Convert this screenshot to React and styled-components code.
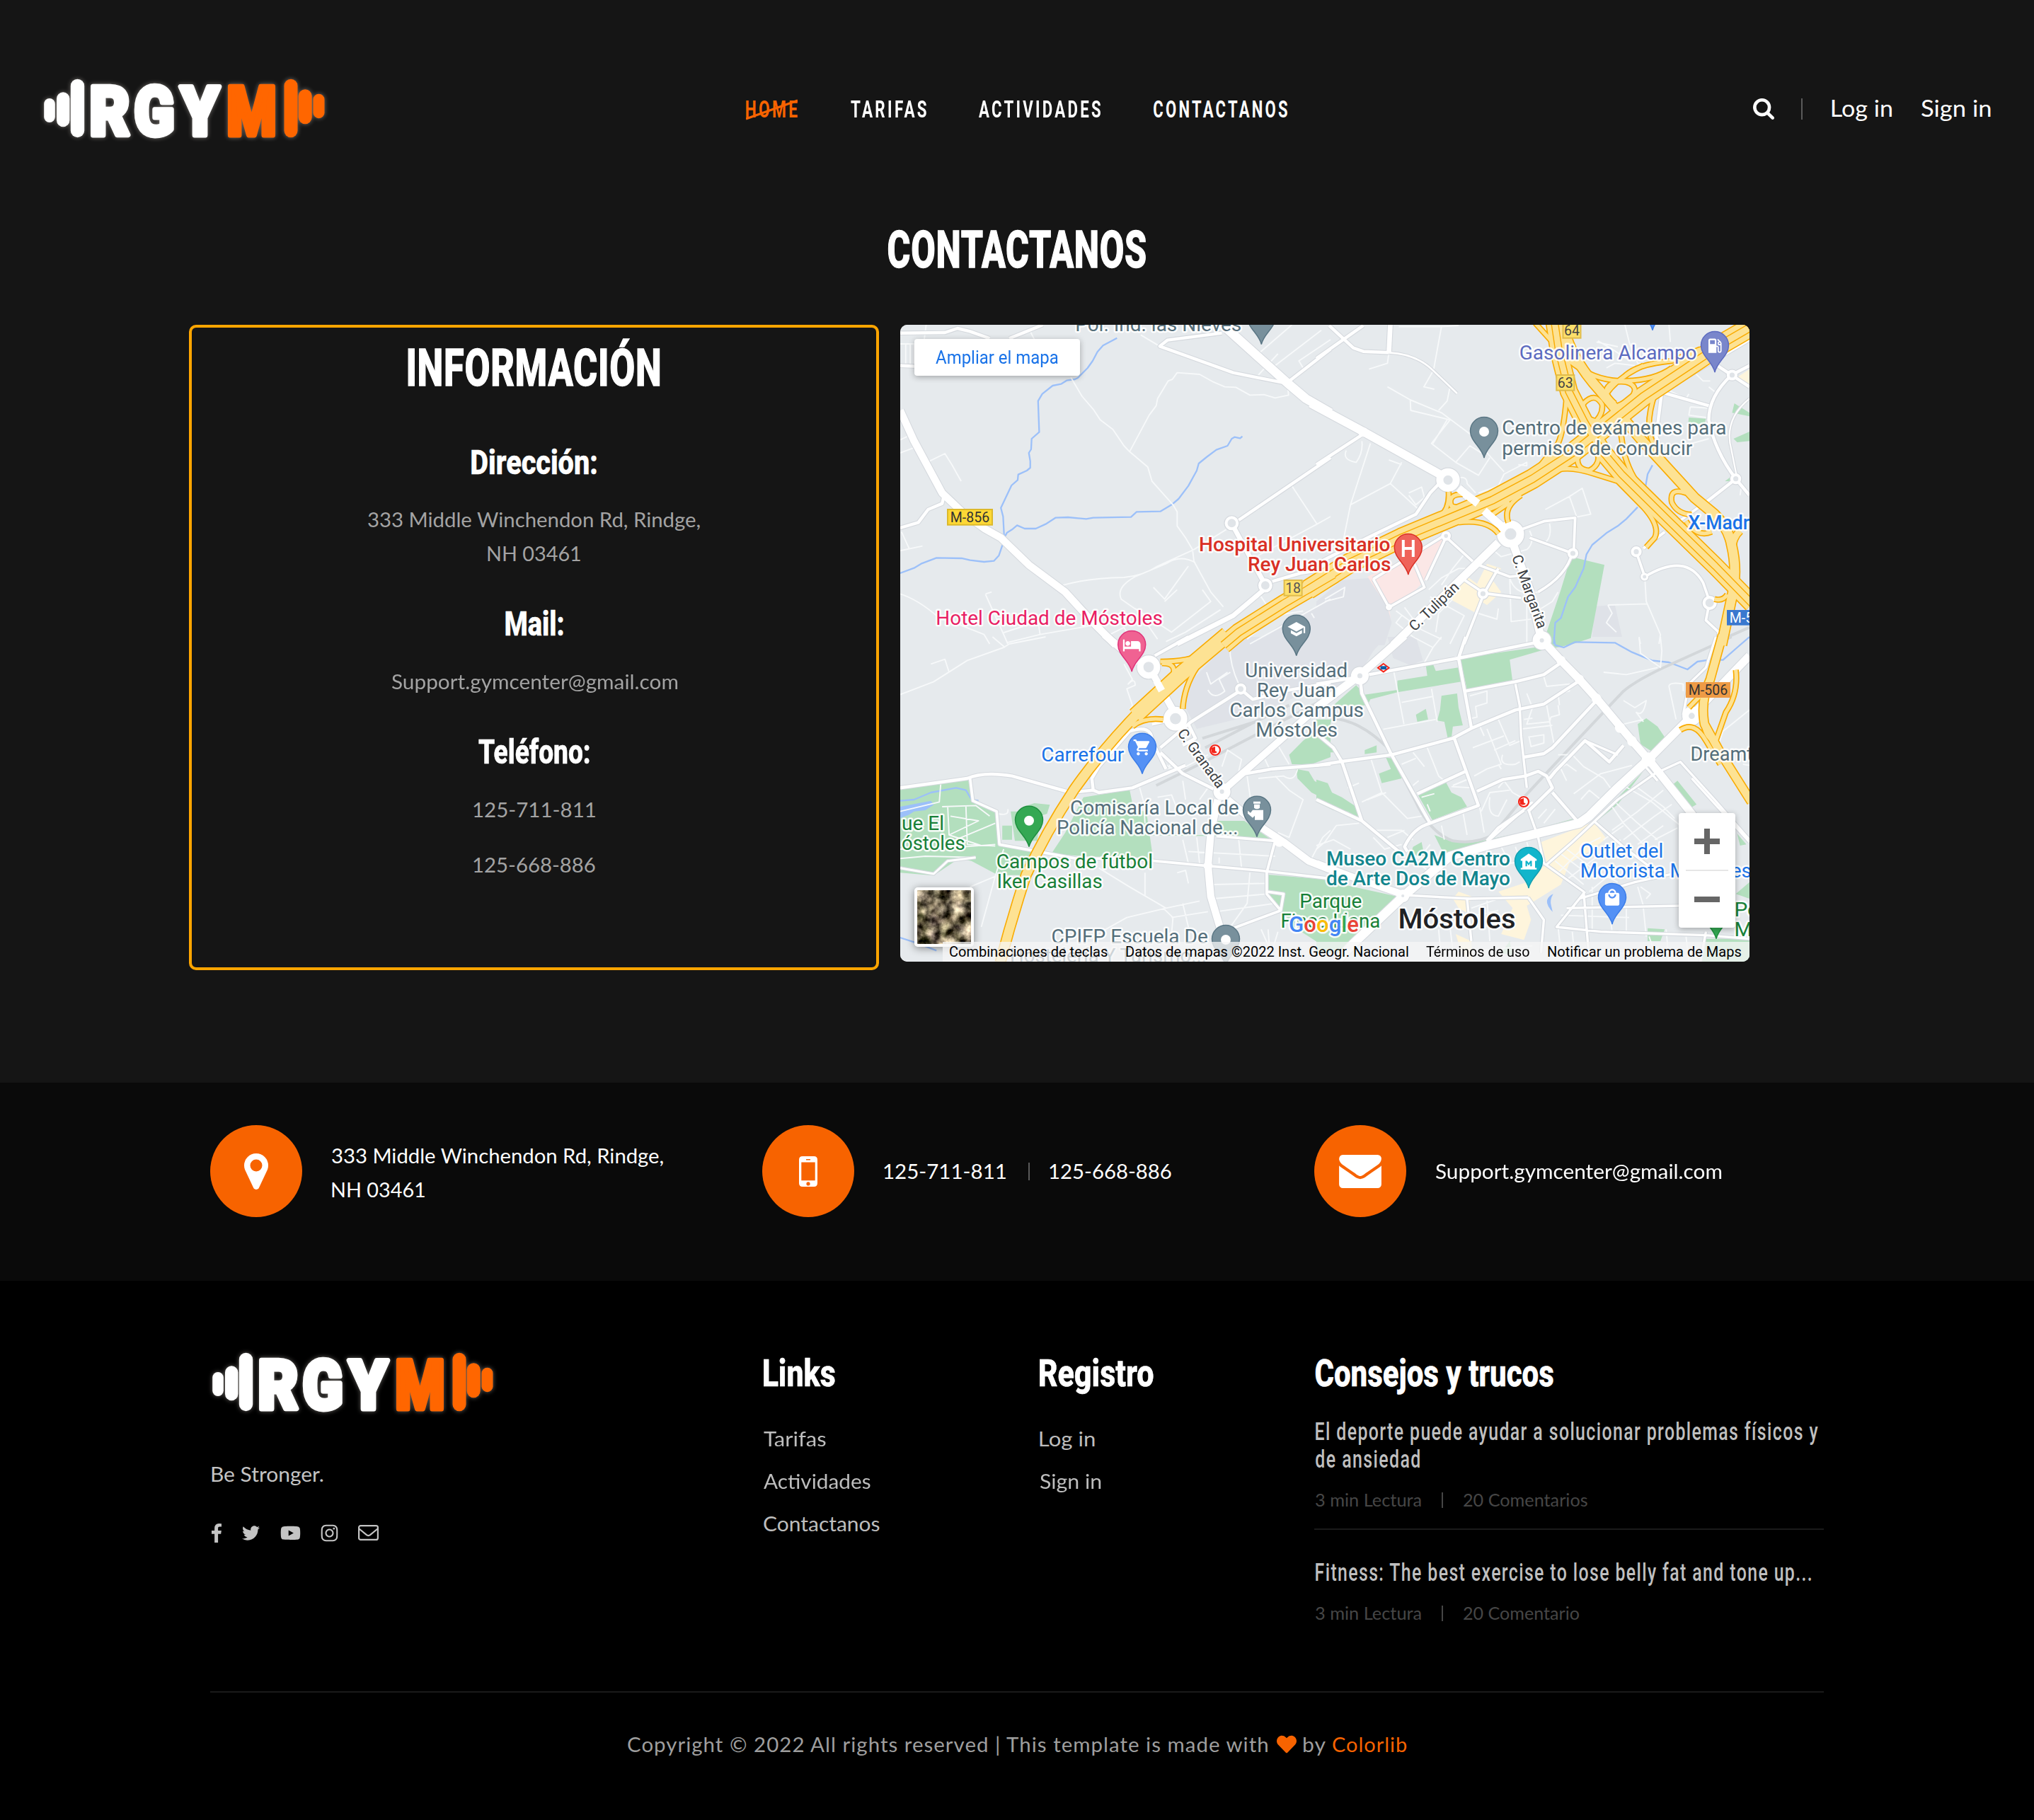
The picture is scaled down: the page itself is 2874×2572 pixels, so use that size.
import React, { useLayoutEffect, useRef, useState } from "react";
import styled, { createGlobalStyle } from "styled-components";
import { FaTwitter, FaYoutube, FaInstagram, FaHeart } from "react-icons/fa";
import { MdHotel, MdShoppingCart, MdSchool, MdLocalGasStation, MdLocalMall, MdMuseum } from "react-icons/md";

const ORANGE = "#f76300";

const GlobalStyle = createGlobalStyle`
  * { box-sizing: border-box; }
  body { margin: 0; background: #000; }
`;

/* ---------- text set to a measured width ---------- */
const FitBox = styled.span`
  display: block;
  flex: none;
  width: ${(p) => p.$w}px;
  white-space: nowrap;
  font-family: ${(p) => (p.$head ? '"Roboto", sans-serif' : '"Lato", sans-serif')};
  font-size: ${(p) => p.$size}px;
  font-weight: ${(p) => p.$weight || 400};
  line-height: ${(p) => p.$line}px;
  letter-spacing: ${(p) => p.$track || 0}px;
  color: ${(p) => p.$color || "#fff"};
  -webkit-text-stroke: ${(p) => p.$bold || 0}px currentColor;
`;
const FitInner = styled.span`
  display: inline-block;
  vertical-align: top;
  transform-origin: 0 50%;
`;

function Fit({ w, size, line, weight, track, color, head, bold, children }) {
  const ref = useRef(null);
  const [transform, setTransform] = useState("none");
  useLayoutEffect(() => {
    const cs = getComputedStyle(ref.current);
    const ctx = document.createElement("canvas").getContext("2d");
    ctx.font = `${cs.fontWeight} ${cs.fontSize} ${cs.fontFamily}`;
    ctx.letterSpacing = `${track || 0}px`;
    const m = ctx.measureText(children);
    const s = w / (m.actualBoundingBoxLeft + m.actualBoundingBoxRight);
    setTransform(`translateX(${m.actualBoundingBoxLeft * s}px) scaleX(${s})`);
  }, [w, track, children]);
  return (
    <FitBox $w={w} $size={size} $line={line} $weight={weight} $track={track} $color={color} $head={head} $bold={bold}>
      <FitInner ref={ref} style={{ transform }}>{children}</FitInner>
    </FitBox>
  );
}

const Display = (p) => <Fit head size={72} line={86} weight={800} bold={1.4} track={1} {...p} />;
const Subhead = (p) => <Fit head size={48.5} line={58} weight={800} bold={0.6} {...p} />;
const Body = (p) => <Fit size={29} line={48} {...p} />;

/* ---------- logo ---------- */
const LogoSvg = styled.svg`
  display: block;
  width: 398px;
  height: 88px;
  flex: none;
  overflow: visible;
  filter: drop-shadow(0 0 3px rgba(255, 245, 235, 0.4));
  text {
    font-family: "Roboto", sans-serif;
    font-weight: 900;
    font-size: 96px;
    stroke-width: 7px;
    stroke-linejoin: round;
  }
`;
const LOGO_BARS = [
  [1.2, 29, 15.6, 34, "#fff"], [19, 20.3, 18.4, 49, "#fff"], [38.8, 1.7, 19.4, 82.5, "#fff"],
  [340.5, 1.7, 19, 82.5, "#ff6600"], [360.7, 16.3, 19, 49, "#ff6600"], [381.5, 22.7, 16, 34.5, "#ff6600"],
];
const LOGO_LETTERS = [
  ["R", 65.5, 57, "#fff"], ["G", 128.5, 57, "#fff"], ["Y", 194, 55, "#fff"], ["M", 259.5, 70, "#ff6600"],
];
const Logo = () => (
  <LogoSvg viewBox="0 0 398 88">
    {LOGO_BARS.map(([x, y, w, h, c]) => <rect key={x} x={x} y={y} width={w} height={h} rx={w / 2} fill={c} />)}
    {LOGO_LETTERS.map(([t, x, w, c]) => (
      <text key={t} x={x} y="80.5" textLength={w} lengthAdjust="spacingAndGlyphs" fill={c} stroke={c}>{t}</text>
    ))}
  </LogoSvg>
);

/* ---------- header ---------- */
const Top = styled.section`
  height: 1530px;
  background: #151515;
`;
const Header = styled.header`
  display: grid;
  grid-template-columns: 1fr auto 1fr;
  align-items: center;
  padding: 110px 62px 0 61px;
`;
const Nav = styled.nav`
  display: flex;
  gap: 74.5px;
`;
const NavItem = styled.a`
  position: relative;
`;
const Strike = styled.svg`
  position: absolute;
  left: 0;
  top: 6px;
  width: 73px;
  height: 30px;
`;
const Account = styled.div`
  display: flex;
  align-items: center;
  justify-self: end;
`;
const Separator = styled.i`
  width: 2px;
  height: ${(p) => p.$h}px;
  margin: 0 ${(p) => p.$right}px 0 ${(p) => p.$left}px;
  background: ${(p) => p.$color || "#5a5a5a"};
`;
const LoginWrap = styled.div`
  display: flex;
  gap: 42px;
  padding-bottom: 2px;
`;
const TitleRow = styled.h1`
  margin: 113px 0 62px;
  display: flex;
  justify-content: center;
`;

/* ---------- panels ---------- */
const Panels = styled.div`
  display: flex;
  align-items: flex-start;
  gap: 30px;
  padding-left: 267px;
`;
const Info = styled.div`
  width: 975px;
  height: 912px;
  padding-top: 15px;
  border: 4px solid #ffa500;
  border-radius: 10px;
  display: flex;
  flex-direction: column;
  align-items: center;
`;
const InfoBlock = styled.div`
  margin-top: ${(p) => p.$mt}px;
  display: flex;
  flex-direction: column;
  align-items: center;
  gap: ${(p) => p.$gap || 0}px;
`;
const InfoTitle = styled.div`
  margin-bottom: 27.5px;
`;

/* ---------- map ---------- */
const MapCard = styled.div`
  position: relative;
  width: 1200px;
  height: 900px;
  border-radius: 10px;
  overflow: hidden;
  background: #e7eaed;
`;
const MapSvg = styled.svg`
  display: block;
  width: 1200px;
  height: 900px;
  font-family: "Roboto", sans-serif;
`;
const Enlarge = styled.button`
  position: absolute;
  left: 20px;
  top: 20px;
  width: 234px;
  height: 52px;
  padding: 0 0 0 30px;
  border: 0;
  border-radius: 4px;
  background: #fff;
  text-align: left;
  box-shadow: 0 2px 8px rgba(0, 0, 0, 0.3);
`;
const ZoomBox = styled.div`
  position: absolute;
  right: 20px;
  top: 690px;
  width: 80px;
  height: 162px;
  border-radius: 4px;
  background: #fff;
  box-shadow: 0 2px 8px rgba(0, 0, 0, 0.3);
  display: flex;
  flex-direction: column;
  align-items: center;
  svg { display: block; }
`;
const ZoomLine = styled.i`
  width: 60px;
  height: 2px;
  background: #e6e6e6;
`;
const Thumb = styled.div`
  position: absolute;
  left: 20px;
  top: 795px;
  width: 84px;
  height: 84px;
  border: 4px solid #fff;
  border-radius: 5px;
  overflow: hidden;
  box-shadow: 0 2px 12px rgba(0, 0, 0, 0.45);
  svg { display: block; }
`;
const Legal = styled.div`
  position: absolute;
  right: 0;
  bottom: 0;
  width: 1140px;
  height: 28px;
  padding-left: 10px;
  display: flex;
  align-items: center;
  gap: 25.5px;
  background: rgba(245, 245, 245, 0.75);
`;

const QUADS = {
  A: "translate(-12,-9) scale(0.39541,0.33333)",
  B: "translate(588,-9) scale(0.40179,0.33333)",
  C: "translate(-12,441) scale(0.39541,0.33333)",
  D: "translate(588,441) scale(0.40179,0.33333)",
};

const CAMPUS = {
  A: "M1568 1200L1500 1230L1400 1290L1290 1380L1568 1380Z",
  B: "M0 1200L90 1110L190 1100L250 1220L265 1290L240 1385L0 1385ZM980 1220L1050 1215L1075 1350L970 1350Z",
  C: "M1220 0L1568 0L1568 190L1300 330L1090 390L1050 300L1060 200Z",
  D: "M0 0L245 0L200 60L170 120L100 200L0 290ZM250 0L350 0L375 100L330 120L270 90Z",
};
const PINK = { B: "M180 1095L290 1030L465 905L385 1105L350 1150L255 1225L262 1275L250 1225Z" };
const CREAM = {
  B: "M520 1085L565 1125L600 1040L650 1060L620 1110L650 1160L600 1215L580 1200L555 1245L470 1190ZM1480 250L1523 215L1523 280Z",
  D: "M790 870L975 785L1020 855L960 910L890 960L860 1050L740 1140L755 1200L730 1285L650 1260L690 1150L640 1080L740 1040L810 960ZM480 1110L500 1080L545 1100L530 1170L500 1150ZM490 1260L545 1290L550 1377L510 1340Z",
};
const GREEN = {
  B: "M895 1010L1013 1045L965 1355L890 1385L810 1385L810 1330L860 1150ZM1310 420L1370 425L1365 450L1308 440ZM1470 360L1523 400L1523 415L1462 400ZM1467 510L1523 480L1523 520L1480 525ZM1437 690L1470 660L1470 690Z",
  C: "M30 645L275 600L290 700L380 745L385 880L470 900L515 920L505 1010L380 1010L285 950L240 940L150 1012L30 1000ZM395 800L430 800L430 860L395 860ZM425 740L455 740L470 720L510 705L565 712L555 750L530 760L520 865L440 865ZM685 680L850 648L865 735L910 740L935 950L570 920L620 830ZM860 840L1140 840L1160 780L1260 780L1350 855L1180 845ZM1342 1008L1568 1030L1568 1330L1450 1240L1390 1160L1340 1090ZM1420 500L1470 440L1568 350L1568 510L1500 540L1430 540ZM1445 560L1490 570L1510 610L1545 640L1568 700L1500 660L1450 600Z",
  D: "M505 90L800 40L830 0L960 0L870 40L800 55L680 97L690 190L530 225ZM285 185L390 165L385 120L410 115L420 145L500 130L510 190L285 235L190 265L180 290L60 290L140 205L170 245L285 225ZM440 250L495 240L500 300L515 375L480 380L475 430L462 430L450 360L425 355L435 310ZM350 330L385 305L393 350L355 360ZM170 480L212 460L212 490L170 497ZM245 512L268 515L300 600L230 620L220 580L262 560ZM355 665L455 615L475 660L510 680L530 720L408 777ZM415 840L480 870L560 870L600 860L760 820L905 770L900 785L600 885L450 915L440 900ZM0 605L40 620L55 660L90 680L140 720L155 770L110 740L60 735L0 700ZM0 350L55 350L30 420L70 490L0 490ZM0 1025L300 1105L130 1300L90 1340L0 1340ZM1130 370L1160 345L1200 380L1225 425L1185 490L1140 455ZM1250 630L1270 610L1337 710L1310 730ZM1150 570L1045 700L975 780L990 778L1060 710ZM340 890L370 870L380 930L330 930ZM1480 835L1512 880L1490 885ZM1165 1235L1225 1240L1210 1290L1165 1290ZM1370 1280L1523 1280L1523 1377L1355 1377ZM1523 1040L1475 1090L1523 1110ZM650 1340L680 1290L690 1350Z",
};
const WATER_FILL = {
  C: "M30 720L140 695L150 712L120 735L80 740L60 755L30 768Z",
  D: "M833 1090Q790 1115 831 1166L826 1140Q820 1115 833 1090Z",
};
const WATER = {
  A: "M805 83L755 115L735 142L718 180L700 210L665 252L655 258L625 263L605 278L575 285L538 320L523 350L527 482L500 510L498 555L490 570L495 605L495 633L483 645L452 662L450 685L428 708L390 803L398 840L402 930L412 908L430 895L448 877L475 891L515 891L550 872L585 845L630 843L695 850L720 845L855 842L875 820L960 818L1000 790L1025 765L1060 710L1090 645L1097 615L1125 588L1160 557L1200 540L1215 510L1225 503L1245 508L1253 500M396 960L383 1005L365 1028L330 1032L280 1025L250 1017L160 1015L105 1040L80 1058L30 1080",
  B: "M1182 622L1165 660L1155 730M1130 800L1090 850L1060 880L1020 910L970 960L950 1000L940 1060L910 1140L885 1180L860 1270L840 1290L835 1380",
  C: "M30 695L80 690L140 660L230 640L265 650L285 690L310 695M30 1275L95 1300L160 1330",
  D: "M835 0L840 35L870 45L910 22L1050 25L1110 65L1180 100L1240 108L1305 138L1340 105L1380 98L1430 98L1480 45L1523 0",
};
const RAIL = {
  B: "M1400 1375L1523 1310",
  C: "M945 630L1100 540L1568 250M1110 430L1300 360L1420 290M1120 470L1330 340",
  D: "M50 345Q150 350 250 470L350 700Q400 830 480 865Q560 880 620 840L730 680L900 460L1080 230Q1130 180 1240 120L1460 0",
};
const MINOR = {
  A: "M640 250L680 330L720 385L745 430L790 470L830 540L850 565L915 630L930 690L960 730L1005 790L1020 820L1020 880L1050 930L1075 980L1080 1030L1110 1095L1140 1160L1185 1223M850 565L920 410L945 370L950 340L988 265L1003 258L1020 230L1100 237L1150 270L1190 290L1230 292L1280 325L1330 323L1370 337L1418 325L1415 285M605 1133Q700 1100 830 1098Q900 1090 950 1050L1080 980L1195 895M1085 1035Q1030 1000 980 1040L870 1095Q800 1140 820 1190L880 1240L950 1360M1430 710L1520 872L1568 840M1520 872L1310 1005M135 605L190 573L215 620L248 690M30 515L60 498M30 570L80 548M30 985L110 965M35 905L62 975M30 1168Q90 1190 160 1260L330 1340L350 1380M335 1168L357 1160M335 1170L400 1340L415 1380M400 1332L470 1305M410 1375L530 1340L700 1305M530 1340L525 1300M935 1140L975 1190L1060 1050M975 1200L1020 1150M1110 1150L1140 1200L1000 1330L870 1230M780 1340L830 1310L850 1350M1175 1235L1050 1330L980 1370M30 108L80 108L80 200M50 108L50 195M66 108L66 195M123 27L115 100M30 70L115 66M495 55L510 90M890 70L958 118M1310 150L1430 27M1370 200L1535 50M1455 180L1470 210L1455 180L1568 90M1310 240L1380 150M1290 1180L1320 1180L1345 1225M1270 1360L1370 1260L1470 1240M1280 1380L1568 1190M1500 1250L1510 1270",
  B: "M185 215L250 190L255 145M290 35L440 35L430 100L412 220L378 290L415 300M440 35L500 30M470 290L460 350L430 390M250 290L330 345L440 400L540 490L660 650M330 345L332 390L470 430L405 530L490 610L570 665L610 590M460 430L410 530M490 610L540 540L580 570M190 530L120 790L95 940M120 790L260 700L360 810M260 700L300 610M105 560Q90 600 140 610Q165 570 160 520M255 600L300 620M325 740L370 715L380 760L350 790L325 750M570 740L640 710L660 660L740 610L740 625L710 620M505 675Q530 670 530 700L560 740M805 810L890 755L935 720L965 830L820 865M890 755L915 840M750 900Q770 950 740 980L650 1010L620 980M820 870Q830 930 800 955M780 1160Q700 1180 680 1100M680 1100L685 1285L790 1270M740 1185L740 1380M440 1130L480 1060L520 1000M395 1150L440 1100L500 1060L560 1060M400 1180L520 1260L470 1380M280 1240L370 1320L440 1360M310 1225L350 1290M480 1190L430 1250L420 1330M555 1245L635 1275L640 1230M850 1160L830 1200L790 1230M300 1260L280 1290L340 1350M985 100L1060 120M990 95L1040 130L1090 170L1150 180M1020 210L1050 190L1120 200M1240 27L1245 100M1085 27L1100 100L1130 190L1200 200M1230 300L1300 340L1310 320M1315 375L1375 380M1315 375L1310 410L1370 420M1380 290L1400 310M1330 230L1360 265L1385 265M1290 540L1380 510M1155 1095L1160 1200L1210 1340L1205 1380M1025 1215L1165 1210M1025 1215L1040 1250L1020 1290L1055 1330M1135 1355L1140 1380M1490 750L1495 710M30 1190L100 1140L95 1180L30 1200",
  C: "M30 245L150 190L270 100L400 45L420 30L550 0M360 0L405 45M140 115L190 95L205 150M830 115L860 180L845 200Q870 170 870 205L840 220L860 290L850 310M1210 0Q1200 100 1240 200M1125 150L1140 200L1200 150M1130 225Q1150 270 1190 230L1170 180L1210 150M885 635L900 700L905 790M950 680L1000 670L1020 730M1040 610L1050 690M1100 690L1130 640M1180 550L1200 480L1250 520L1240 570M1270 590L1290 750M1330 510L1350 560M1370 590L1420 650L1470 690L1420 850L1380 830M1310 600L1400 590Q1440 620 1450 560M1380 460L1420 540M740 980L850 1060L980 1150L1100 1120M905 1000L905 1100M1000 1190L1130 1165M970 1150L1005 1190L1000 1260L1020 1300M980 1150L840 1190L750 1250M280 1060L370 1015M400 900L370 1015L320 1230M1040 860L1060 960M1090 850L1100 960M1240 860L1250 980M1060 910L1370 930M1150 1050L1340 1045M1150 1110L1340 1090M1160 1165L1370 1130M1280 1000L1270 1130L1210 1230M1020 1000L1050 990L1060 1045M1170 960L1170 935M1040 1130L1060 1230M1320 1240L1350 1320L1345 1240M1380 1250L1360 1330M200 720L205 840L320 885M175 625L170 700L30 740M180 720L300 715L350 760M265 715L270 880L370 887M210 870L370 790M205 840L310 780L210 760M30 900L200 895L370 880M30 940L120 930L300 935M380 750Q420 760 415 730M960 530L1020 570L1130 500M980 460L1010 420L1050 410M1000 520L990 560M1500 940L1540 850L1568 820M1568 530L1480 550",
  D: "M340 0L410 45L440 0M410 45L370 130M272 145L308 370M300 278L412 252M235 392L420 350M405 220L425 360M540 250L600 230L600 280L560 295L565 340L530 350M590 420L575 380M640 350L680 460L720 440M625 480L700 440M550 470L660 420M600 390L650 540L600 560L555 590M655 500Q640 550 700 540L715 530M800 170L810 210L890 200L890 230L850 240L855 290M740 240L760 300L740 370L820 360L825 340L855 330L850 290M810 290L835 450M725 390L830 375M745 425L800 415L800 450L755 465L748 425M730 350L760 345M850 560L880 540L915 570M880 610L860 560M900 500L940 550L1010 600L1040 650M945 440L1000 500M850 500L900 500M905 665L1000 580L1110 545M930 690L960 650L1000 690M1080 270L1120 300L1160 270Q1150 340 1125 320L1150 360M1135 0L1140 70L1210 130L1215 60L1210 0M1080 370L1150 350M1240 210Q1240 190 1290 200L1290 230M1240 210L1265 350M1010 150L1090 160L1200 130M1430 400L1523 310M1410 470L1430 400M1500 540L1523 545M1080 630L1180 700L1280 800M1050 700L1130 790L1200 860M1040 720L1080 790L1150 880M1130 640L1220 720L1260 770M1040 820L1130 740L1220 650M1080 860L1190 760L1250 710M1130 880L1220 800M1190 860L1270 810M1010 860L1080 800M880 900L980 990L1060 1040M860 920L960 1010M840 950L940 1050M850 1000L950 880L1000 850M880 1030L1000 920L1070 860M960 1080L1060 980M340 490L380 550M390 470L430 590L450 610M300 540L350 515M340 630L360 610M190 510L230 660L160 700M230 660L320 770L370 760M180 690L245 660M110 640L150 620M70 800L30 870L0 900M70 800L150 790M200 820L300 820L340 860M250 850L310 820M480 630L540 600L550 640L475 635M370 680L415 665M400 740L390 710M450 860L440 800M530 840L515 740M590 830L570 690M580 740L610 660L680 650M610 680Q600 760 640 760L670 690M640 640L660 610L690 660L720 680M640 540L650 560M780 770L810 730M800 790L840 730M640 880L750 850M650 890L680 960L750 950M700 890L720 960M740 870L760 950M310 890L360 940L400 880M360 960L440 930M340 940L400 1000M545 1150L640 1110M470 1230L480 1330L500 1377M430 1240L440 1377M560 1180L640 1160M560 1230L650 1220M600 1110L610 1290M850 1230L860 1340M900 1250L910 1377M970 1060L970 1250M1030 1150L1040 1250M1090 1140L1090 1260M1150 1150L1160 1270M1000 1100L1020 1060L1080 1080M1140 1060L1175 1090L1160 1110M1130 1060L1150 1140M860 1180L1100 1190M920 1330L1200 1350M1170 1270L1200 1377M560 1330L760 1310M1230 1240L1240 1377M1300 1270L1310 1377M200 850L240 900L300 880M0 885L60 860L120 900",
};
const MAJOR = [
  ["A", 6, "M30 62L190 60L235 42L280 55L350 85M420 85L540 27M1180 62L985 92L958 118L1220 230L1410 275L1568 130M1240 855L1568 590M1360 1115L1460 1080L1568 1060M30 200L90 203M185 760L180 785L130 810L95 865L30 888"],
  ["B", 6, "M0 620L165 490M0 1040L180 930L350 830L400 740L440 690M0 170L165 30M45 30L130 125L165 140L255 145"],
  ["B", 9, "M255 145L260 27"],
  ["B", 3.5, "M255 145Q350 150 410 220L495 318"],
  ["A", 9, "M1215 870L1335 1130M1340 1140L1220 1260L1020 1380"],
  ["B", 6, "M1460 240Q1380 330 1380 430Q1400 560 1475 680L1523 750M1475 680L1375 775M1205 310L1380 370M1460 240L1410 200M1460 240L1523 200M1460 240L1523 290M1523 90L1215 310L1195 500L1230 620L1360 780"],
  ["B", 5, "M1375 775L1270 865M1225 905L1150 975M1125 990L1155 1095Q1300 990 1360 1120L1383 1200L1370 1280L1415 1330L1410 1380"],
  ["B", 5, "M750 930L900 995Q880 1090 780 1160M720 895L800 860L910 845L905 990M520 1380L590 1165L640 1060M560 1040L680 1095L720 1090M510 1100L590 1165L720 1185M200 1105L450 920L550 1030M200 1105L255 1225L380 1140L345 1040M385 1110L455 930"],
  ["B", 3, "M1523 340Q1430 430 1460 560L1480 680"],
  ["C", 6, "M1060 0L940 80M720 650L740 660L860 640L960 590L1050 545M30 640L270 600Q330 570 430 590L640 660L720 650L715 600L740 550L850 400Q930 370 930 440L980 560M1240 585L1360 560L1568 540M1150 645L1040 580L960 490M960 470L1070 360L1250 225M1250 225L1290 265L1400 230L1568 195M930 370L1000 350M1060 370L1085 430L1040 460"],
  ["C", 5, "M280 600L290 695L375 740L385 880L500 905L660 940L850 940L1120 970L1310 990L1568 1025M1160 845L1370 865L1340 1000L1340 1090L1390 1160L1220 1235M1390 1160L1400 1090L1340 1080"],
  ["C", 4, "M30 980L150 1005L200 950L300 935"],
  ["D", 6, "M0 200L150 170M185 160L500 90L790 20M500 90L545 385M155 190L160 240L260 490L400 790M500 90L525 0M0 545L90 528L265 500L480 430L550 385L700 310L800 285L920 190M525 230L700 190L800 160L860 110M985 270L830 470L800 495L730 510M0 410L60 470L90 530L160 780L300 920M400 790L570 715L485 430M355 665L525 570M565 655L655 605L735 590L780 570L810 590L830 640L745 740M600 865L640 810L730 735M830 660L920 785M820 600L840 570L945 440L1030 530L1080 460M400 790Q340 810 310 890L320 910M0 690L160 780"],
  ["D", 4.5, "M700 200L715 290L720 420L740 640M745 730L780 850L800 960M600 870L760 700M310 1095L540 1110L745 1105M745 1105L800 1200L790 1340M530 1110L545 1290M800 960L940 1080L960 1377M810 965L900 870L1060 690L1190 580L1280 530L1400 690L1523 860M945 1080L845 1230L1000 1250L1370 1265L1523 1280M880 1150L1280 1140M925 1110L1120 1040L1270 1000M1320 600L1523 870M975 780L1080 890L1200 1000M1060 500L945 440M1000 270L1060 370M1150 540L1200 610M1370 1250L1350 1377M1405 0L1370 130L1310 200L1290 330"],
  ["A", 14, "M30 390L80 520L180 740L260 830L330 890L390 930L490 1045L620 1160L720 1290L800 1385"],
  ["C", 14, "M760 -10L880 110"],
  ["A", 17, "M1190 35L1415 275L1480 340L1568 400"],
  ["B", 16, "M-20 360L165 480L440 665"],
  ["B", 15, "M500 720L660 890M270 1385L640 950M690 950L750 1150L795 1380"],
  ["C", 13, "M935 160L1005 310M1568 250L1180 655"],
  ["C", 14, "M1200 690L1310 800L1400 870L1490 950L1575 990M1165 690L1140 830L1130 970L1140 1100L1175 1240"],
  ["D", 15, "M310 -5L150 165L0 300M795 15L860 100L925 180L985 260L1065 375L1110 440L1168 520L1320 750L1400 880M1168 520L1320 335L1523 80"],
  ["D", 17, "M1168 520L1060 640L960 760L925 790L600 885L470 930L310 1095L130 1300L70 1377"],
  ["D", 13, "M0 960L120 1015L300 1090"],
];
const ROUNDABOUTS = [
  ["B", 463, 685, 29, 10], ["B", 683, 914, 34, 11], ["C", 918, 128, 30, 9], ["C", 1014, 347, 31, 9],
  ["D", 153, 165, 20, 9], ["D", 793, 15, 20, 10], ["D", 1320, 335, 22, 9], ["C", 1180, 656, 19, 9],
  ["A", 1215, 868, 20, 4], ["A", 1335, 1132, 20, 4], ["B", 902, 996, 14, 4], ["B", 1125, 989, 14, 4],
  ["B", 1383, 1206, 20, 4], ["B", 1475, 680, 14, 4], ["B", 586, 1167, 14, 4], ["B", 456, 922, 12, 4],
  ["B", 1462, 240, 14, 4], ["B", 1154, 1095, 10, 3], ["C", 1247, 221, 15, 4], ["D", 304, 1098, 14, 7], ["B", 255, 1224, 6, 4],
];
const HUBS = [["D", 1168, 520, 24, 30], ["D", 860, 100, 16, 20], ["D", 925, 180, 16, 20], ["D", 985, 262, 17, 22], ["D", 1068, 385, 18, 22], ["D", 1110, 442, 17, 22], ["D", 925, 790, 16, 18], ["C", 1130, 970, 16, 18], ["B", 165, 482, 18, 20], ["C", 1385, 870, 18, 20]];

const RAMPS = [
  ["B", "M770 20L890 180Q980 270 1090 265Q1190 262 1250 210M1050 360Q990 300 1050 270Q1110 260 1120 300Q1120 340 1060 370M1010 440Q920 430 940 360Q980 310 1005 365Q1010 410 970 450M1080 250Q1120 195 1250 180L1350 130M1020 320Q1060 250 1150 200M880 330Q870 480 850 530L790 620M1190 320Q1150 470 1190 540M1105 400L1070 480L1080 560Q1100 660 1150 730M920 580Q910 640 960 645Q1000 620 990 570M830 650Q880 620 980 660L1060 690L1150 800Q1210 880 1190 930L1160 970M1300 740Q1240 715 1250 780Q1270 830 1320 832M1300 860Q1340 930 1390 905M465 735Q470 820 420 850L340 890M515 745Q460 745 475 795Q520 815 560 790M640 912Q600 850 500 865M675 865Q655 800 720 750M620 830L680 780M1400 1190Q1430 1200 1445 1170"],
  ["C", "M960 105Q1060 105 1120 70M965 112Q1020 110 1005 165L940 230M1040 305Q1045 210 1090 130M970 350Q900 340 860 380"],
  ["D", "M1280 395Q1330 355 1370 440L1420 540M1475 140Q1485 240 1440 320L1405 440Q1370 440 1360 360M1350 250L1310 300"],
];
const HIGHWAYS = [
  ["B", 26, 11, "M838 18L853 140L888 310L943 440L1003 560L1073 660L1233 850L1403 1050L1533 1210"],
  ["B", 16, 0, "M880 80Q910 190 1000 310L1070 410L1140 510L1220 615L1330 760L1400 830Q1450 890 1460 960Q1480 1060 1465 1160L1425 1385"],
  ["B", 12, 0, "M1490 900Q1455 940 1465 1010"],
  ["D", 14, 0, "M1428 -8L1385 180Q1350 270 1365 370L1420 490L1530 700"],
  ["C", 16, 0, "M388 1380Q430 1190 480 1010Q550 830 650 650Q750 480 890 310"],
  ["C", 24, 0, "M870 335L1030 160L1200 -10"],
  ["A", 26, 12, "M1185 1385L1240 1330L1400 1210L1580 1085"],
  ["B", 29, 12, "M-30 1150L120 1035L300 930L500 830L620 770L760 680L900 570L1000 475L1150 330L1300 210L1430 105L1530 35"],
];

const Shape = styled.path`
  fill: ${(p) => p.$fill || "none"};
  stroke: ${(p) => p.$stroke || "none"};
  stroke-width: ${(p) => p.$w || 0}px;
  stroke-linejoin: round;
  vector-effect: non-scaling-stroke;
`;
const Layer = ({ paths, ...style }) =>
  Object.entries(paths).map(([q, d]) => (
    <g key={q} transform={QUADS[q]}><Shape d={d} {...style} /></g>
  ));
const Strokes = ({ list, stroke, width }) =>
  list.map((it, i) => (
    <g key={i} transform={QUADS[it[0]]}><Shape d={it[it.length - 1]} $stroke={stroke} $w={width(it)} /></g>
  ));
const Rings = ({ stroke, extra }) =>
  ROUNDABOUTS.map(([q, x, y, r, w], i) => (
    <g key={i} transform={QUADS[q]}>
      <Shape as="ellipse" cx={x} cy={y} rx={r} ry={r * 1.2} $fill="#e0e4e8" $stroke={stroke} $w={w + extra} />
    </g>
  ));

const SLATE = "#546e7a", BLUE = "#1a73e8", LEAF = "#188038", RED = "#d93025", TEAL = "#12858d";
const LABELS = [
  [248.2, 482.3, 8.7, "Pol. Ind. las Nieves", SLATE],
  [51.3, 370.8, 423.7, "Hotel Ciudad de Móstoles", "#e91e63"],
  [423, 692.5, 320.3, "Hospital Universitario", RED, 500],
  [492, 693.3, 348.3, "Rey Juan Carlos", RED, 500],
  [875.7, 1125.6, 48.7, "Gasolinera Alcampo", "#5c6bc0"],
  [851.2, 1167.4, 155, "Centro de exámenes para", SLATE],
  [851.2, 1119.2, 183.7, "permisos de conducir", SLATE],
  [1114.4, 1222, 289.3, "X-Madrid", BLUE, 500],
  [488.2, 632.2, 497.7, "Universidad", SLATE],
  [504.8, 616, 525.7, "Rey Juan", SLATE],
  [466.4, 655, 553.7, "Carlos Campus", SLATE],
  [503.2, 618, 581.7, "Móstoles", SLATE],
  [200.3, 316.2, 616.7, "Carrefour", BLUE],
  [241, 478.7, 691.7, "Comisaría Local de", SLATE],
  [222, 477.5, 719.7, "Policía Nacional de...", SLATE],
  [136.7, 357, 768, "Campos de fútbol", LEAF],
  [137.5, 285.7, 796, "Iker Casillas", LEAF],
  [3, 62, 714.3, "ue El", LEAF],
  [3, 91.6, 742.3, "óstoles", LEAF],
  [214.6, 434.8, 873.7, "CPIFP Escuela De", SLATE],
  [156, 433, 901, "Hostelería Y Turismo...", SLATE],
  [602.9, 862, 763.7, "Museo CA2M Centro", TEAL, 500],
  [602.9, 862, 791.7, "de Arte Dos de Mayo", TEAL, 500],
  [565.3, 652.3, 824.3, "Parque", LEAF],
  [538.4, 678.4, 852.3, "Finca Llana", LEAF],
  [961.7, 1078.2, 752.7, "Outlet del", BLUE],
  [961.7, 1203, 781, "Motorista Móstoles", BLUE],
  [1117.6, 1205, 615.7, "Dreamt", SLATE],
  [1179.4, 1214, 835.7, "Po", LEAF],
  [1179.4, 1204, 863.7, "M", LEAF],
];
const MapText = styled.text`
  font-size: ${(p) => p.$size || 27.5}px;
  font-weight: ${(p) => p.$weight || 400};
  fill: ${(p) => p.$color};
  stroke: ${(p) => (p.$plain ? "none" : "rgba(255,255,255,0.88)")};
  stroke-width: 5px;
  stroke-linejoin: round;
  paint-order: stroke;
`;
const BADGES = [
  [66, 260, 65, 23.7, "M-856", "#fdd835", "#dcb92b", "#333"],
  [541.6, 360, 27, 23.7, "18", "#fde06b", "#e0bc4c", "#555"],
  [926.3, 70, 27, 23.7, "63", "#fde06b", "#e0bc4c", "#444"],
  [935.5, -4, 27, 23.7, "64", "#fde06b", "#e0bc4c", "#444"],
  [1168, 403, 52, 21.7, "M-50", "#3a78cf", "#3a78cf", "#fff"],
  [1110, 505, 63, 22, "M-506", "#ee9b46", "#ee9b46", "#333"],
];
const PINS = [
  [1151, 67, "#7986cb", "#5c6bc0", MdLocalGasStation], [825, 188, "#78909c", "#5a7684", "dot"],
  [717.8, 353, "#ef635a", "#d93025", "H"], [327.2, 490, "#f06292", "#e0337a", MdHotel],
  [559.8, 467.7, "#78909c", "#5a7684", MdSchool], [342, 634.7, "#5491f5", "#3b7de8", MdShoppingCart],
  [504, 723.7, "#78909c", "#5a7684", "police"], [182, 737.7, "#34a853", "#1e8e3e", "dot"],
  [460, 906, "#78909c", "#5a7684", "dot"], [888, 796, "#12b5cb", "#129eaf", MdMuseum],
  [1006, 847, "#5491f5", "#3b7de8", MdLocalMall], [1153, 867.7, "#34a853", "#1e8e3e", "dot"],
  [510.3, 27.7, "#78909c", "#5a7684", "dot"], [1063, 7.7, "#5491f5", "#3b7de8", "dot"],
];
function Pin({ x, y, fill, edge, glyph: Glyph }) {
  return (
    <g transform={`translate(${x},${y})`}>
      <path d="M0 0C-3 -15 -19.5 -23 -19.5 -38A19.5 19.5 0 0 1 19.5 -38C19.5 -23 3 -15 0 0Z" fill={fill} stroke={edge} strokeWidth="1.5" />
      {Glyph === "dot" && <circle cy="-37" r="7" fill="#fff" />}
      {Glyph === "H" && <path d="M-7 -49V-25M7 -49V-25M-7 -37H7" stroke="#fff" strokeWidth="4" fill="none" />}
      {Glyph === "police" && (
        <path d="M-5 -50H5V-47H-5ZM-4 -46H4V-41Q0 -38 -4 -41ZM-13 -37L-9 -34L-6 -38L9 -38V-24H-3V-30L-6 -27L-13 -33Z" fill="#fff" />
      )}
      {typeof Glyph === "function" && <Glyph x="-13.5" y="-51" size={27} color="#fff" />}
    </g>
  );
}
const Train = ({ x, y }) => (
  <g transform={`translate(${x},${y})`}>
    <circle r="8.5" fill="#fff" />
    <circle r="7" fill="none" stroke="#f3261b" strokeWidth="2.2" />
    <path d="M-6 -3L0 -5V1L3 3Q-2 6 -5 3Z" fill="#f3261b" />
  </g>
);
const GOOGLE = [["G", "#4285f4"], ["o", "#ea4335"], ["o", "#fbbc04"], ["g", "#4285f4"], ["l", "#34a853"], ["e", "#ea4335"]];

const CityMap = () => (
  <MapCard>
    <MapSvg viewBox="0 0 1200 900">
      <rect width="1200" height="900" fill="#e6eaed" />
      <Layer paths={CAMPUS} $fill="#dfe2e8" />
      <Layer paths={PINK} $fill="#fbe7e6" />
      <Layer paths={CREAM} $fill="#fef5dc" />
      <Layer paths={GREEN} $fill="#b3dfbe" />
      <Layer paths={WATER_FILL} $fill="#9cc0f9" />
      <Layer paths={WATER} $stroke="#9cc0f9" $w={2.3} />
      <Layer paths={RAIL} $stroke="#d3d7da" $w={4} />
      <Layer paths={MINOR} $stroke="#f7f9fa" $w={1.9} />
      <Strokes list={MAJOR} stroke="#d5d9de" width={(it) => it[1] * 0.74 + 2.2} />
      <Rings stroke="#d5d9de" extra={2.4} />
      <Strokes list={MAJOR} stroke="#fff" width={(it) => it[1] * 0.74} />
      <Rings stroke="#fff" extra={0} />
      {HUBS.map(([q, x, y, rx, ry], i) => (
        <g key={i} transform={QUADS[q]}><ellipse cx={x} cy={y} rx={rx} ry={ry} fill="#fff" /></g>
      ))}
      <Strokes list={RAMPS} stroke="#f9ab00" width={() => 8.5} />
      <Strokes list={HIGHWAYS} stroke="#f9ab00" width={(it) => it[1]} />
      <Strokes list={RAMPS} stroke="#fde293" width={() => 5.2} />
      <Strokes list={HIGHWAYS} stroke="#fde293" width={(it) => it[1] - 3.2} />
      <Strokes list={HIGHWAYS.filter((h) => h[2])} stroke="#f9ab00" width={(it) => it[2]} />
      <Strokes list={HIGHWAYS.filter((h) => h[2])} stroke="#fde293" width={(it) => it[2] - 2.8} />
      <g transform={QUADS.B}><Shape d="M500 720L568 785M590 815L640 870" $stroke="#fff" $w={11} /></g>
      <g transform={QUADS.C}><Shape d="M945 185L965 228" $stroke="#fff" $w={10} /></g>

      {BADGES.map(([x, y, w, h, t, f, s, c]) => (
        <g key={t}>
          <rect x={x + 1} y={y + 1} width={w - 2} height={h - 2} fill={f} stroke={s} strokeWidth="2" />
          <MapText $plain $size={19.5} $color={c} x={x + w / 2} y={y + h / 2 + 7} textAnchor="middle">{t}</MapText>
        </g>
      ))}
      <MapText $size={20.5} $color="#3c4043" transform="translate(864,328) rotate(70)" textLength="109">C. Margarita</MapText>
      <MapText $size={20.5} $color="#3c4043" transform="translate(727,434) rotate(-44)" textLength="89">C. Tulipán</MapText>
      <MapText $size={20.5} $color="#3c4043" transform="translate(391,577) rotate(54)" textLength="98">C. Granada</MapText>
      {PINS.map(([x, y, f, e, g]) => <Pin key={x} x={x} y={y} fill={f} edge={e} glyph={g} />)}
      {LABELS.map(([x1, x2, y, t, c, w]) => (
        <MapText key={t + y} x={x1 - 1} y={y} textLength={x2 - x1 + 1} lengthAdjust="spacingAndGlyphs" $color={c} $weight={w}>{t}</MapText>
      ))}
      <MapText $size={39} $weight={500} $color="#202124" x="703.5" y="852.7" textLength="166" lengthAdjust="spacingAndGlyphs">Móstoles</MapText>
      <MapText $size={31} $weight={500} $color="#fff" x="549" y="857.7" textLength="99" lengthAdjust="spacingAndGlyphs">
        {GOOGLE.map(([t, c], i) => <tspan key={i} fill={c}>{t}</tspan>)}
      </MapText>
      <Train x={445} y={601} />
      <Train x={881} y={674} />
      <path d="M682.8 479L690.5 484.7L682.8 490.4L675 484.7Z" fill="#fff" stroke="#f3261b" strokeWidth="2" />
      <rect x="678.5" y="482.3" width="8.6" height="4.8" fill="#0b5ea8" />
    </MapSvg>
    <Enlarge><Fit head w={173} size={25.5} line={50} color={BLUE}>Ampliar el mapa</Fit></Enlarge>
    <ZoomBox>
      <svg width="80" height="80"><path d="M22 40H58M40 22V58" stroke="#666" strokeWidth="8" /></svg>
      <ZoomLine />
      <svg width="80" height="80"><path d="M22 40H58" stroke="#666" strokeWidth="8" /></svg>
    </ZoomBox>
    <Thumb>
      <svg width="76" height="76">
        <filter id="ground" x="0" y="0" width="1" height="1" colorInterpolationFilters="sRGB">
          <feTurbulence type="fractalNoise" baseFrequency="0.06" numOctaves="5" seed="4" />
          <feColorMatrix values="1.7 0.25 0 0 -0.49  1.6 0.3 0 0 -0.51  1.4 0.2 0.1 0 -0.5  0 0 0 0 1" />
        </filter>
        <rect width="76" height="76" filter="url(#ground)" />
      </svg>
    </Thumb>
    <Legal>
      <Fit head w={223} size={20} line={28} color="#000">Combinaciones de teclas</Fit>
      <Fit head w={399} size={20} line={28} color="#000">Datos de mapas ©2022 Inst. Geogr. Nacional</Fit>
      <Fit head w={146} size={20} line={28} color="#000">Términos de uso</Fit>
      <Fit head w={273.5} size={20} line={28} color="#000">Notificar un problema de Maps</Fit>
    </Legal>
  </MapCard>
);

/* ---------- contact strip ---------- */
const Strip = styled.section`
  height: 280px;
  padding: 60px 297px 0;
  background: #0a0a0a;
  display: grid;
  grid-template-columns: repeat(3, 780px);
`;
const StripItem = styled.div`
  height: 130px;
  display: flex;
  align-items: center;
`;
const Disc = styled.div`
  flex: none;
  width: 130px;
  height: 130px;
  margin-right: ${(p) => p.$gap || 42}px;
  border-radius: 50%;
  background: ${ORANGE};
  display: flex;
  align-items: center;
  justify-content: center;
`;
const Address = styled.div`
  padding-top: 4px;
`;
const Glyph = ({ box, w, h, d, color = "#fff" }) => (
  <svg viewBox={box} width={w} height={h} fill={color}><path fillRule="evenodd" d={d} /></svg>
);
const SEARCH = "M1152 832q0-185-131.5-316.5t-316.5-131.5-316.5 131.5-131.5 316.5 131.5 316.5 316.5 131.5 316.5-131.5 131.5-316.5zm512 832q0 52-38 90t-90 38q-54 0-90-38l-343-342q-179 124-399 124-143 0-273.5-55.5t-225-150-150-225-55.5-273.5 55.5-273.5 150-225 225-150 273.5-55.5 273.5 55.5 225 150 150 225 55.5 273.5q0 220-124 399l343 343q37 37 37 90z";
const MARKER = "M1152 640q0-106-75-181t-181-75-181 75-75 181 75 181 181 75 181-75 75-181zm256 0q0 109-33 179l-364 774q-16 33-47.5 52t-67.5 19-67.5-19-46.5-52l-365-774q-33-70-33-179 0-212 150-362t362-150 362 150 150 362z";
const MOBILE = "M5 0H21Q26 0 26 5V38Q26 43 21 43H5Q0 43 0 38V5Q0 0 5 0ZM3.3 8.5V34.3H22.7V8.5ZM10 4V5.6H16V4ZM13 36.3A2.6 2.6 0 1 0 13 41.5A2.6 2.6 0 1 0 13 36.3Z";
const ENVELOPE = "M1792 710v794q0 66-47 113t-113 47h-1472q-66 0-113-47t-47-113v-794q44 49 101 87 362 246 497 345 57 42 92.5 65.5t94.5 48 110 24.5h2q51 0 110-24.5t94.5-48 92.5-65.5q170-123 498-345 57-39 100-87zm0-294q0 79-49 151t-122 123q-376 261-468 325-10 7-42.5 31t-54 38.5-52 32.5-57.5 27-50 9h-2q-23 0-50-9t-57.5-27-52-32.5-54-38.5-42.5-31q-91-64-262-182.5t-205-142.5q-62-42-117-115.5t-55-136.5q0-78 41.5-130t118.5-52h1472q65 0 112.5 47t47.5 113z";
const FACEBOOK = "M1343 12v264h-157q-86 0-116 36t-30 108v189h293l-39 296h-254v759h-306v-759h-255v-296h255v-218q0-186 104-288.500t277-102.500q147 0 228 12z";

/* ---------- footer ---------- */
const Footer = styled.footer`
  height: 762px;
  padding: 0 297px;
  background: #000;
`;
const Columns = styled.div`
  height: 582px;
  display: grid;
  grid-template-columns: 780px 390px 390px 720px;
  border-bottom: 2px solid #1a1a1a;
`;
const Column = styled.div`
  padding: ${(p) => p.$pt || 96.5}px 0 0 1.5px;
`;
const Tagline = styled.div`
  margin: 61px 0 45px;
`;
const Social = styled.div`
  display: flex;
  align-items: center;
  height: 28px;
  gap: 29px;
  svg { display: block; flex: none; }
`;
const SocialIcon = styled.span`
  margin: 0 ${(p) => p.$trim || 0}px;
`;
const LinkList = styled.ul`
  list-style: none;
  margin: 30px 0 0;
  padding: 0;
`;
const Article = styled.article`
  margin-left: -1.5px;
  padding: ${(p) => p.$pt}px 0 20.5px 1.5px;
  border-bottom: ${(p) => (p.$last ? "0" : "2px solid #1a1a1a")};
`;
const Meta = styled.div`
  display: flex;
  align-items: center;
  margin-top: 17.5px;
`;
const Copyright = styled.div`
  display: flex;
  align-items: center;
  justify-content: center;
  gap: 10px;
  padding-top: 49px;
`;
const Head = (p) => <Fit head size={54.5} line={66} weight={800} bold={0.6} {...p} />;
const FootLink = (p) => <li><Fit size={29} line={60} color="#bdbdbd" {...p} /></li>;
const Story = (p) => <Fit head size={35.5} line={39} track={2} color="#bfbfbf" weight={500} {...p} />;
const MetaLine = ({ comments, w }) => (
  <Meta>
    <Fit w={149} size={24.5} line={40} color="#464646">3 min Lectura</Fit>
    <Separator $h={22} $left={29} $right={29} $color="#464646" />
    <Fit w={w} size={24.5} line={40} color="#464646">{comments}</Fit>
  </Meta>
);

export default function App() {
  const nav = { size: 34, line: 40, weight: 700, track: 5, head: true };
  const legal = { size: 29, line: 48, color: "#9e9e9e", track: 1 };
  return (
    <>
      <GlobalStyle />
      <Top>
        <Header>
          <Logo />
          <Nav>
            <NavItem>
              <Fit {...nav} w={73} color={ORANGE}>HOME</Fit>
              <Strike viewBox="0 0 73 30"><path d="M0 28L73 2" stroke={ORANGE} strokeWidth="3.4" /></Strike>
            </NavItem>
            <NavItem><Fit {...nav} w={107}>TARIFAS</Fit></NavItem>
            <NavItem><Fit {...nav} w={172}>ACTIVIDADES</Fit></NavItem>
            <NavItem><Fit {...nav} w={189}>CONTACTANOS</Fit></NavItem>
          </Nav>
          <Account>
            <Glyph box="0 128 1664 1664" w={30} h={30} d={SEARCH} />
            <Separator $h={30} $left={38} $right={41} />
            <LoginWrap>
              <Fit w={85} size={32} line={44}>Log in</Fit>
              <Fit w={97.5} size={32} line={44}>Sign in</Fit>
            </LoginWrap>
          </Account>
        </Header>
        <TitleRow><Display w={364}>CONTACTANOS</Display></TitleRow>
        <Panels>
          <Info>
            <Display w={355}>INFORMACIÓN</Display>
            <InfoBlock $mt={60.5}>
              <InfoTitle><Subhead w={177}>Dirección:</Subhead></InfoTitle>
              <Body w={470} color="#a3a3a3">333 Middle Winchendon Rd, Rindge,</Body>
              <Body w={131} color="#a3a3a3">NH 03461</Body>
            </InfoBlock>
            <InfoBlock $mt={47}>
              <InfoTitle><Subhead w={82}>Mail:</Subhead></InfoTitle>
              <Body w={404} color="#a3a3a3">Support.gymcenter@gmail.com</Body>
            </InfoBlock>
            <InfoBlock $mt={47.5}>
              <InfoTitle><Subhead w={157}>Teléfono:</Subhead></InfoTitle>
              <InfoBlock $mt={0} $gap={30}>
                <Body w={172} color="#a3a3a3">125-711-811</Body>
                <Body w={172} color="#a3a3a3">125-668-886</Body>
              </InfoBlock>
            </InfoBlock>
          </Info>
          <CityMap />
        </Panels>
      </Top>
      <Strip>
        <StripItem>
          <Disc><Glyph box="384 128 1024 1536" w={34} h={51} d={MARKER} /></Disc>
          <Address>
            <Body w={469}>333 Middle Winchendon Rd, Rindge,</Body>
            <Body w={131}>NH 03461</Body>
          </Address>
        </StripItem>
        <StripItem>
          <Disc><Glyph box="0 0 26 43" w={26} h={43} d={MOBILE} /></Disc>
          <Body w={172}>125-711-811</Body>
          <Separator $h={25} $left={32} $right={28} />
          <Body w={172}>125-668-886</Body>
        </StripItem>
        <StripItem>
          <Disc $gap={40.5}><Glyph box="0 256 1792 1408" w={60} h={47} d={ENVELOPE} /></Disc>
          <Body w={404} line={46}>Support.gymcenter@gmail.com</Body>
        </StripItem>
      </Strip>
      <Footer>
        <Columns>
          <Column $pt={100}>
            <Logo />
            <Tagline><Body w={158} color="#c4c4c4">Be Stronger.</Body></Tagline>
            <Social>
              <Glyph box="479 0 864 1664" w={14} h={27} d={FACEBOOK} color="#c4c4c4" />
              <FaTwitter color="#c4c4c4" size="25px" />
              <FaYoutube color="#c4c4c4" size="29px" />
              <SocialIcon $trim={-2}><FaInstagram color="#c4c4c4" size="27px" /></SocialIcon>
              <svg width="29" height="22" viewBox="0 0 29 22" fill="none" stroke="#c4c4c4" strokeWidth="2.2">
                <rect x="1.1" y="1.1" width="26.8" height="19.8" rx="2.5" />
                <path d="M1.5 5.5L12 14.2Q14.5 16 17 14.2L27.5 5.5" />
              </svg>
            </Social>
          </Column>
          <Column>
            <Head w={101}>Links</Head>
            <LinkList>
              <FootLink w={88}>Tarifas</FootLink>
              <FootLink w={151}>Actividades</FootLink>
              <FootLink w={164}>Contactanos</FootLink>
            </LinkList>
          </Column>
          <Column>
            <Head w={161}>Registro</Head>
            <LinkList>
              <FootLink w={78}>Log in</FootLink>
              <FootLink w={87}>Sign in</FootLink>
            </LinkList>
          </Column>
          <Column>
            <Head w={336}>Consejos y trucos</Head>
            <Article $pt={31.5}>
              <Story w={710}>El deporte puede ayudar a solucionar problemas físicos y</Story>
              <Story w={147}>de ansiedad</Story>
              <MetaLine comments="20 Comentarios" w={175} />
            </Article>
            <Article $pt={41} $last>
              <Story w={701}>Fitness: The best exercise to lose belly fat and tone up...</Story>
              <MetaLine comments="20 Comentario" w={163} />
            </Article>
          </Column>
        </Columns>
        <Copyright>
          <Fit {...legal} w={907}>Copyright © 2022 All rights reserved | This template is made with</Fit>
          <FaHeart color={ORANGE} size="28px" />
          <Fit {...legal} w={31}>by</Fit>
          <Fit {...legal} w={104} color={ORANGE}>Colorlib</Fit>
        </Copyright>
      </Footer>
    </>
  );
}
